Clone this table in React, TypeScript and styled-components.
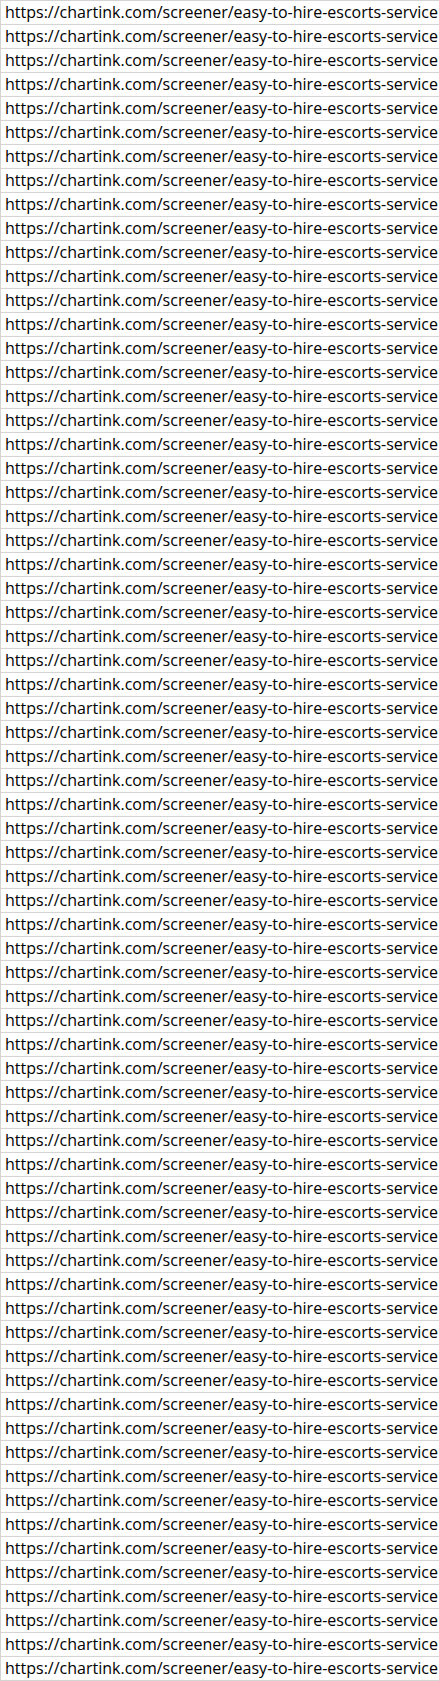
import React from "react";
import styled, { createGlobalStyle } from "styled-components";

const Global = createGlobalStyle`
  html, body { margin: 0; padding: 0; background: #ffffff; }
  body { font-family: "Open Sans", "Noto Sans", sans-serif; }
`;

const Sheet = styled.table`
  border-collapse: collapse;
  border-spacing: 0;
`;

const Cell = styled.td`
  height: 23px;
  padding: 0 1px 0 4px;
  border: 1px solid #d4d4d4;
  font-size: 16px;
  line-height: 23px;
  color: #000;
  white-space: nowrap;
  vertical-align: middle;
`;

const URL = "https://chartink.com/screener/easy-to-hire-escorts-service";

export default function App() {
  const rows = Array.from({ length: 70 }, (_, i) => i);
  return (
    <>
      <Global />
      <Sheet>
        <tbody>
          {rows.map((i) => (
            <tr key={i}>
              <Cell>{URL}</Cell>
            </tr>
          ))}
        </tbody>
      </Sheet>
    </>
  );
}
